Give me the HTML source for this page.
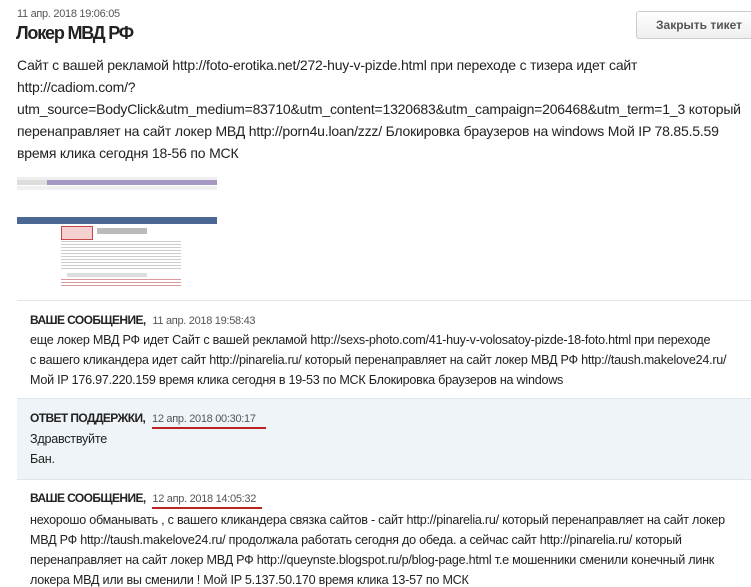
<!DOCTYPE html>
<html><head><meta charset="utf-8"><style>
body{margin:0;width:751px;height:578px;overflow:hidden;background:#fff;font-family:"Liberation Sans","DejaVu Sans",sans-serif;color:#222;position:relative}
.a{position:absolute;white-space:nowrap}
.t{font-size:13px;letter-spacing:-0.2px}
.m{font-size:14px;letter-spacing:-0.2px}
.s{font-size:12.6px;letter-spacing:-0.25px}
.d{font-size:11px;color:#555;letter-spacing:-0.3px}
.h{font-size:12px;font-weight:bold;letter-spacing:-0.6px}
.u{border-bottom:2px solid #b22;padding-bottom:2px}
</style></head><body>
<div class="a d" style="left:17px;top:8px">11 апр. 2018 19:06:05</div>
<div class="a" style="left:16px;top:23px;font-size:18px;font-weight:bold;letter-spacing:-1.2px">Локер МВД РФ</div>
<div class="a" style="left:636px;top:11px;width:120px;height:26px;border:1px solid #ccc;border-radius:3px;background:linear-gradient(#fff,#eee);font-size:12px;font-weight:bold;color:#555;line-height:26px;text-indent:19px">Закрыть тикет</div>
<div class="a m" style="left:17px;top:57px">Сайт с вашей рекламой http://foto-erotika.net/272-huy-v-pizde.html при переходе с тизера идет сайт</div>
<div class="a m" style="left:17px;top:79px">http://cadiom.com/?</div>
<div class="a m" style="left:17px;top:101px">utm_source=BodyClick&amp;utm_medium=83710&amp;utm_content=1320683&amp;utm_campaign=206468&amp;utm_term=1_3 который</div>
<div class="a m" style="left:17px;top:123px">перенаправляет на сайт локер МВД http://porn4u.loan/zzz/ Блокировка браузеров на windows Мой IP 78.85.5.59</div>
<div class="a m" style="left:17px;top:145px">время клика сегодня 18-56 по МСК</div>
<!-- thumbnail -->
<div class="a" style="left:17px;top:177px;width:200px;height:110px;background:#fff">
 <div class="a" style="left:0;top:0;width:200px;height:3px;background:#eee"></div>
 <div class="a" style="left:0;top:3px;width:200px;height:5px;background:#a797c4"></div>
 <div class="a" style="left:0;top:3px;width:30px;height:5px;background:#ddd"></div>
 <div class="a" style="left:0;top:9px;width:200px;height:4px;background:#f0f0f0"></div>
 <div class="a" style="left:0;top:40px;width:200px;height:7px;background:#4b6894"></div>
 <div class="a" style="left:44px;top:49px;width:30px;height:12px;border:1px solid #c44;background:#f4d0d0"></div>
 <div class="a" style="left:80px;top:51px;width:50px;height:6px;background:#bbb"></div>
 <div class="a" style="left:44px;top:64px;width:120px;height:30px;background:repeating-linear-gradient(#ccc 0 1px,#fff 1px 3px)"></div>
 <div class="a" style="left:50px;top:96px;width:80px;height:4px;background:#ddd"></div>
 <div class="a" style="left:44px;top:102px;width:120px;height:8px;background:repeating-linear-gradient(#d99 0 1px,#fff 1px 3px)"></div>
</div>
<div class="a" style="left:17px;top:300px;width:734px;height:1px;background:#e4e4e4"></div>
<div class="a h" style="left:30px;top:313px">ВАШЕ СООБЩЕНИЕ, <span class="d" style="font-weight:normal;margin-left:4px">11 апр. 2018 19:58:43</span></div>
<div class="a s" style="left:30px;top:333px">еще локер МВД РФ идет Сайт с вашей рекламой http://sexs-photo.com/41-huy-v-volosatoy-pizde-18-foto.html при переходе</div>
<div class="a s" style="left:30px;top:353px">с вашего кликандера идет сайт http://pinarelia.ru/ который перенаправляет на сайт локер МВД РФ http://taush.makelove24.ru/</div>
<div class="a s" style="left:30px;top:373px">Мой IP 176.97.220.159 время клика сегодня в 19-53 по МСК Блокировка браузеров на windows</div>
<div class="a" style="left:17px;top:398px;width:734px;height:80px;background:#eef4f7;border-top:1px solid #dde5ea;border-bottom:1px solid #dde5ea"></div>
<div class="a h" style="left:30px;top:411px">ОТВЕТ ПОДДЕРЖКИ, <span class="d u" style="font-weight:normal;margin-left:4px;padding-right:10px">12 апр. 2018 00:30:17</span></div>
<div class="a s" style="left:30px;top:432px">Здравствуйте</div>
<div class="a s" style="left:30px;top:452px">Бан.</div>
<div class="a h" style="left:30px;top:491px">ВАШЕ СООБЩЕНИЕ, <span class="d u" style="font-weight:normal;margin-left:4px;padding-right:6px">12 апр. 2018 14:05:32</span></div>
<div class="a s" style="left:30px;top:513px">нехорошо обманывать , с вашего кликандера связка сайтов - сайт http://pinarelia.ru/ который перенаправляет на сайт локер</div>
<div class="a s" style="left:30px;top:533px">МВД РФ http://taush.makelove24.ru/ продолжала работать сегодня до обеда. а сейчас сайт http://pinarelia.ru/ который</div>
<div class="a s" style="left:30px;top:553px">перенаправляет на сайт локер МВД РФ http://queynste.blogspot.ru/p/blog-page.html т.е мошенники сменили конечный линк</div>
<div class="a s" style="left:30px;top:573px">локера МВД или вы сменили ! Мой IP 5.137.50.170 время клика 13-57 по МСК</div>
</body></html>
